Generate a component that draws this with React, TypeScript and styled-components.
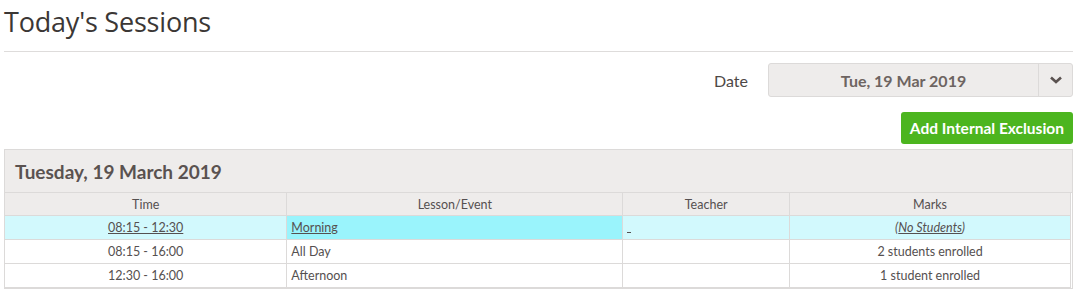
import React from "react";
import styled, { createGlobalStyle } from "styled-components";

const Global = createGlobalStyle`
  html, body { margin: 0; padding: 0; background: #fff; }
  body { font-family: Lato, "Liberation Sans", sans-serif; color: #555050; }
`;

const Page = styled.div`
  padding: 0 6px 0 4px;
`;

const Title = styled.h1`
  margin: 0;
  padding: 4px 0 0 0;
  height: 47px;
  font-family: "Open Sans", sans-serif;
  font-weight: 400;
  font-size: 27px;
  line-height: 36px;
  color: #3b3735;
  border-bottom: 1px solid #dedcdb;
  letter-spacing: -0.2px;
`;

const DateRow = styled.div`
  display: flex;
  justify-content: flex-end;
  align-items: center;
  gap: 20px;
  margin-top: 11px;
  padding-right: 0;
`;

const DateLabel = styled.span`
  font-size: 16px;
  color: #4d4846;
`;

const Select = styled.div`
  display: flex;
  width: 303px;
  height: 32px;
  border: 1px solid #dcdad9;
  border-radius: 3px;
  background: #eeeceb;
  box-sizing: content-box;
`;

const SelectValue = styled.div`
  flex: 1;
  display: flex;
  align-items: center;
  justify-content: center;
  font-weight: 700;
  font-size: 16px;
  color: #6d6461;
`;

const SelectToggle = styled.div`
  width: 33px;
  border-left: 1px solid #dcdad9;
  display: flex;
  align-items: center;
  justify-content: center;
`;

const ButtonRow = styled.div`
  display: flex;
  justify-content: flex-end;
  margin-top: 15px;
  padding-right: 0;
`;

const GreenButton = styled.button`
  height: 32px;
  padding: 0 9px;
  border: none;
  border-radius: 3px;
  background: #4cb51f;
  color: #fff;
  font-family: Lato, sans-serif;
  font-weight: 700;
  font-size: 15.5px;
  cursor: pointer;
`;

const Panel = styled.div`
  margin-top: 5px;
  border: 1px solid #dcdad9;
  width: 1067px;
`;

const PanelHeader = styled.div`
  height: 42px;
  display: flex;
  align-items: center;
  padding-left: 10px;
  background: #eeeceb;
  border-bottom: 1px solid #dcdad9;
  font-weight: 700;
  font-size: 19px;
  color: #5a5250;
`;

const Table = styled.table`
  width: 1066px;
  border-collapse: collapse;
  font-size: 12.5px;
  color: #555050;
`;

const Th = styled.th`
  height: 22px;
  padding: 0 4px;
  font-weight: 400;
  background: #eeeceb;
  border: 1px solid #dcdad9;
  border-top: none;
  text-align: center;
  &:first-child { border-left: none; }
`;

const Tr = styled.tr<{ $active?: boolean }>`
  background: ${(p) => (p.$active ? "#d2f9fd" : "#fff")};
`;

const Td = styled.td<{ $align?: string; $hl?: boolean }>`
  height: 23px;
  padding: 0 4px;
  border: 1px solid #dcdad9;
  text-align: ${(p) => p.$align || "left"};
  background: ${(p) => (p.$hl ? "#9af4fc" : "transparent")};
  &:first-child { border-left: none; }
`;

const Link = styled.a`
  color: #555050;
  text-decoration: underline;
`;

const Dash = styled.span`
  display: inline-block;
  width: 4px;
  height: 1px;
  background: #555050;
  margin-top: 8px;
  vertical-align: middle;
`;

const Italic = styled.span`
  font-style: italic;
`;

const Chevron = () => (
  <svg width="14" height="10" viewBox="0 0 14 10">
    <path d="M2 2.5 L7 7 L12 2.5" fill="none" stroke="#5a5250" strokeWidth="2.6" />
  </svg>
);

const rows = [
  { time: "08:15 - 12:30", lesson: "Morning", marks: "none", active: true },
  { time: "08:15 - 16:00", lesson: "All Day", marks: "2 students enrolled" },
  { time: "12:30 - 16:00", lesson: "Afternoon", marks: "1 student enrolled" },
];

export default function App() {
  return (
    <Page>
      <Global />
      <Title>Today's Sessions</Title>
      <DateRow>
        <DateLabel>Date</DateLabel>
        <Select>
          <SelectValue>Tue, 19 Mar 2019</SelectValue>
          <SelectToggle>
            <Chevron />
          </SelectToggle>
        </Select>
      </DateRow>
      <ButtonRow>
        <GreenButton>Add Internal Exclusion</GreenButton>
      </ButtonRow>
      <Panel>
        <PanelHeader>Tuesday, 19 March 2019</PanelHeader>
        <Table>
          <colgroup>
            <col style={{ width: 282 }} />
            <col style={{ width: 336 }} />
            <col style={{ width: 167 }} />
            <col style={{ width: 281 }} />
          </colgroup>
          <thead>
            <tr>
              <Th>Time</Th>
              <Th>Lesson/Event</Th>
              <Th>Teacher</Th>
              <Th>Marks</Th>
            </tr>
          </thead>
          <tbody>
            {rows.map((r) => (
              <Tr key={r.time + r.lesson} $active={r.active}>
                <Td $align="center">
                  {r.active ? <Link>{r.time}</Link> : r.time}
                </Td>
                <Td $hl={r.active}>{r.active ? <Link>{r.lesson}</Link> : r.lesson}</Td>
                <Td>{r.active ? <Dash /> : null}</Td>
                <Td $align="center">
                  {r.marks === "none" ? (
                    <Italic>
                      (<Link>No Students</Link>)
                    </Italic>
                  ) : (
                    r.marks
                  )}
                </Td>
              </Tr>
            ))}
          </tbody>
        </Table>
      </Panel>
    </Page>
  );
}
